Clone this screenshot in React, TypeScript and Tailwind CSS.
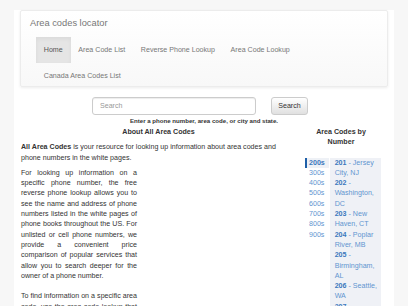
import React from "react";

const tabs = ["200s", "300s", "400s", "500s", "600s", "700s", "800s", "900s"];
const codes: [string, string][] = [
  ["201", "Jersey City, NJ"],
  ["202", "Washington, DC"],
  ["203", "New Haven, CT"],
  ["204", "Poplar River, MB"],
  ["205", "Birmingham, AL"],
  ["206", "Seattle, WA"],
  ["207", "Portland, ME"],
  ["208", "Boise, ID"],
];

export default function App() {
  return (
    <div className="h-[306px] overflow-hidden bg-[#f7f7f7] pt-[10px] font-['Liberation_Sans',Arial,sans-serif] text-[#333]">
      <div className="mx-[14px] h-[400px] bg-white px-[6px]">
        {/* navbar */}
        <div className="rounded-[2px] border border-[#ececec] bg-gradient-to-b from-white to-[#f8f8f8] shadow-[0_1px_3px_rgba(0,0,0,0.08)] pl-[15px] pr-[8px] h-[77px]">
          <div className="h-[26px] flex items-center ml-[-6px] text-[9.3px] text-[#777]">
            Area codes locator
          </div>
          <ul className="flex flex-wrap text-[7.1px] leading-[10.4px] text-[#777]">
            <li className="px-[7.8px] py-[7.8px] bg-[#e5e5e5] text-[#555] shadow-[inset_0_2px_4px_rgba(0,0,0,0.05)]">Home</li>
            <li className="px-[7.8px] py-[7.8px]">Area Code List</li>
            <li className="px-[7.8px] py-[7.8px]">Reverse Phone Lookup</li>
            <li className="px-[7.8px] py-[7.8px]">Area Code Lookup</li>
            <li className="px-[7.8px] py-[7.8px]">Canada Area Codes List</li>
          </ul>
        </div>

        {/* search */}
        <div className="mt-[10px] flex justify-center pr-[8px]">
          <div className="w-[164px] h-[18px] rounded-[3px] border border-[#ccc] flex items-center pl-[7px] text-[7.1px] text-[#999] shadow-[inset_0_1px_1px_rgba(0,0,0,0.075)]">
            Search
          </div>
          <div className="ml-[15px] w-[37px] h-[18px] rounded-[3px] border border-[#ccc] bg-gradient-to-b from-white to-[#e0e0e0] flex items-center justify-center text-[7.1px] text-[#333]">
            Search
          </div>
        </div>
        <div className="mt-[1px] text-center text-[6.1px] font-bold leading-[9px] text-[#333]">
          Enter a phone number, area code, or city and state.
        </div>

        <div className="flex mt-[2px]">
          {/* left column */}
          <div className="w-[279px] pl-[1px] text-[7.1px] leading-[10.3px]">
            <div className="text-center font-bold pr-[3px] leading-[10.3px]">About All Area Codes</div>
            <p className="mt-[5px] mr-[16px]">
              <b>All Area Codes</b> is your resource for looking up information about area codes and phone numbers in the white pages.
            </p>
            <p className="mt-[5px] w-[116px] text-justify">
              For looking up information on a specific phone number, the free reverse phone lookup allows you to see the name and address of phone numbers listed in the white pages of phone books throughout the US. For unlisted or cell phone numbers, we provide a convenient price comparison of popular services that allow you to search deeper for the owner of a phone number.
            </p>
            <p className="mt-[10.3px] w-[116px] text-justify">
              To find information on a specific area code, use the area code lookup that allows you to find details.
            </p>
          </div>

          {/* right column */}
          <div className="ml-[6px] w-[76px] text-[7.1px] leading-[10.3px]">
            <div className="mx-auto w-[64px] pr-[4px] text-center font-bold">Area Codes by Number</div>
            <div className="mt-[10px] flex">
              <div className="w-[24px] mr-[1px]">
                {tabs.map((t, i) => (
                  <div
                    key={t}
                    className={
                      i === 0
                        ? "border-l-[2px] border-[#1e5fa8] bg-[#eef1f6] pl-[2px] font-bold text-[#3a78bd]"
                        : "pl-[4px] text-[#5f95d0]"
                    }
                  >
                    {t}
                  </div>
                ))}
              </div>
              <div className="w-[52px] bg-[#eff1f6] pl-[5px] pr-[2px] text-[#5f95d0] h-[200px]">
                {codes.map(([c, n]) => (
                  <div key={c}>
                    <b className="text-[#3a78bd]">{c}</b> - {n}
                  </div>
                ))}
              </div>
            </div>
          </div>
        </div>
      </div>
    </div>
  );
}
